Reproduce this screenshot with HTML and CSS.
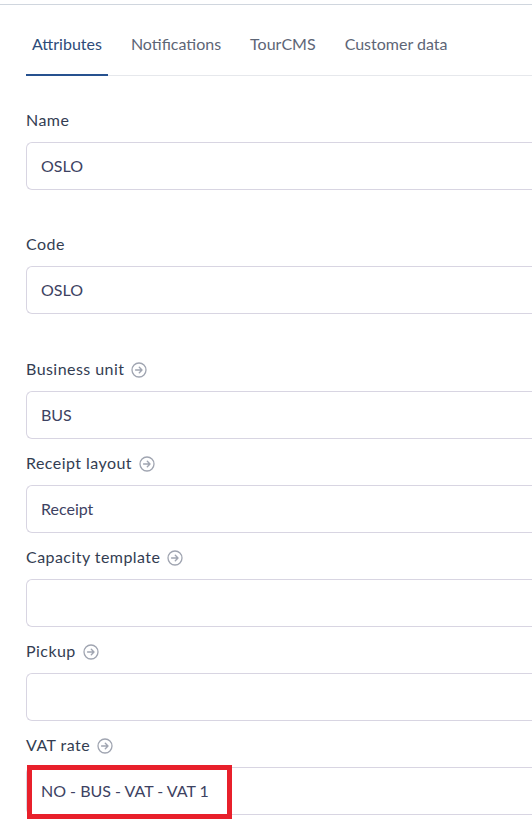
FILE: index.html
```html
<!DOCTYPE html>
<html>
<head>
<meta charset="utf-8">
<link rel="stylesheet" href="styles.css">
</head>
<body>
<div class="topline"></div>
<div class="page">
  <nav class="tabs">
    <div class="tab active">Attributes</div>
    <div class="tab">Notifications</div>
    <div class="tab">TourCMS</div>
    <div class="tab">Customer data</div>
  </nav>
  <form class="form">
    <div class="group spaced">
      <label class="label">Name</label>
      <div class="input">OSLO</div>
    </div>
    <div class="group spaced more">
      <label class="label">Code</label>
      <div class="input">OSLO</div>
    </div>
    <div class="group">
      <label class="label">Business unit <span class="go"><svg viewBox="0 0 16 16" width="16" height="16"><circle cx="8" cy="8" r="7" fill="none" stroke="#a0a5b1" stroke-width="1.3"/><path d="M4.6 8h6.2M8.3 5.3L11 8l-2.7 2.7" fill="none" stroke="#a0a5b1" stroke-width="1.4" stroke-linecap="round" stroke-linejoin="round"/></svg></span></label>
      <div class="input">BUS</div>
    </div>
    <div class="group">
      <label class="label">Receipt layout <span class="go"><svg viewBox="0 0 16 16" width="16" height="16"><circle cx="8" cy="8" r="7" fill="none" stroke="#a0a5b1" stroke-width="1.3"/><path d="M4.6 8h6.2M8.3 5.3L11 8l-2.7 2.7" fill="none" stroke="#a0a5b1" stroke-width="1.4" stroke-linecap="round" stroke-linejoin="round"/></svg></span></label>
      <div class="input">Receipt</div>
    </div>
    <div class="group">
      <label class="label">Capacity template <span class="go"><svg viewBox="0 0 16 16" width="16" height="16"><circle cx="8" cy="8" r="7" fill="none" stroke="#a0a5b1" stroke-width="1.3"/><path d="M4.6 8h6.2M8.3 5.3L11 8l-2.7 2.7" fill="none" stroke="#a0a5b1" stroke-width="1.4" stroke-linecap="round" stroke-linejoin="round"/></svg></span></label>
      <div class="input"></div>
    </div>
    <div class="group">
      <label class="label">Pickup <span class="go"><svg viewBox="0 0 16 16" width="16" height="16"><circle cx="8" cy="8" r="7" fill="none" stroke="#a0a5b1" stroke-width="1.3"/><path d="M4.6 8h6.2M8.3 5.3L11 8l-2.7 2.7" fill="none" stroke="#a0a5b1" stroke-width="1.4" stroke-linecap="round" stroke-linejoin="round"/></svg></span></label>
      <div class="input"></div>
    </div>
    <div class="group">
      <label class="label">VAT rate <span class="go"><svg viewBox="0 0 16 16" width="16" height="16"><circle cx="8" cy="8" r="7" fill="none" stroke="#a0a5b1" stroke-width="1.3"/><path d="M4.6 8h6.2M8.3 5.3L11 8l-2.7 2.7" fill="none" stroke="#a0a5b1" stroke-width="1.4" stroke-linecap="round" stroke-linejoin="round"/></svg></span></label>
      <div class="input highlighted">NO - BUS - VAT - VAT 1<span class="mark"></span></div>
    </div>
  </form>
</div>
</body>
</html>
```
FILE: styles.css
```css
html, body {
  margin: 0;
  padding: 0;
  background: #ffffff;
  overflow: hidden;
}
body {
  font-family: Lato, "Open Sans", sans-serif;
  color: #333d52;
  width: 532px;
}
.topline {
  margin-top: 4px;
  height: 1px;
  background: #d0d6de;
}
.page {
  padding-left: 26px;
}
.tabs {
  display: flex;
  gap: 17px;
  height: 71px;
  border-bottom: 1px solid #e6e8ec;
  box-sizing: border-box;
}
.tab {
  padding: 28px 6px 0;
  font-size: 16px;
  line-height: 22px;
  color: #5d6576;
  box-sizing: border-box;
}
.tab.active {
  color: #2d4b79;
  border-bottom: 2px solid #26518f;
  margin-bottom: -1px;
}
.form {
  padding-top: 32px;
  display: flex;
  flex-direction: column;
}
.group {
  display: flex;
  flex-direction: column;
  margin-bottom: 12px;
}
.group.spaced {
  margin-bottom: 42px;
}
.group.spaced.more {
  margin-bottom: 43px;
}
.label {
  font-size: 16px;
  line-height: 24px;
  letter-spacing: 0.45px;
  color: #333d52;
  margin-bottom: 10px;
  display: flex;
  align-items: center;
  gap: 7px;
}
.go {
  display: inline-flex;
  margin-top: 2px;
}
.input {
  position: relative;
  width: 530px;
  height: 48px;
  box-sizing: border-box;
  border: 1px solid #d8d5e2;
  border-right: none;
  border-radius: 6px 0 0 6px;
  padding-left: 14px;
  font-size: 16px;
  line-height: 46px;
  color: #3d4262;
}
.mark {
  position: absolute;
  left: 0;
  top: -3px;
  width: 205px;
  height: 54px;
  border: 5px solid #e8202b;
  box-sizing: border-box;
}
```
